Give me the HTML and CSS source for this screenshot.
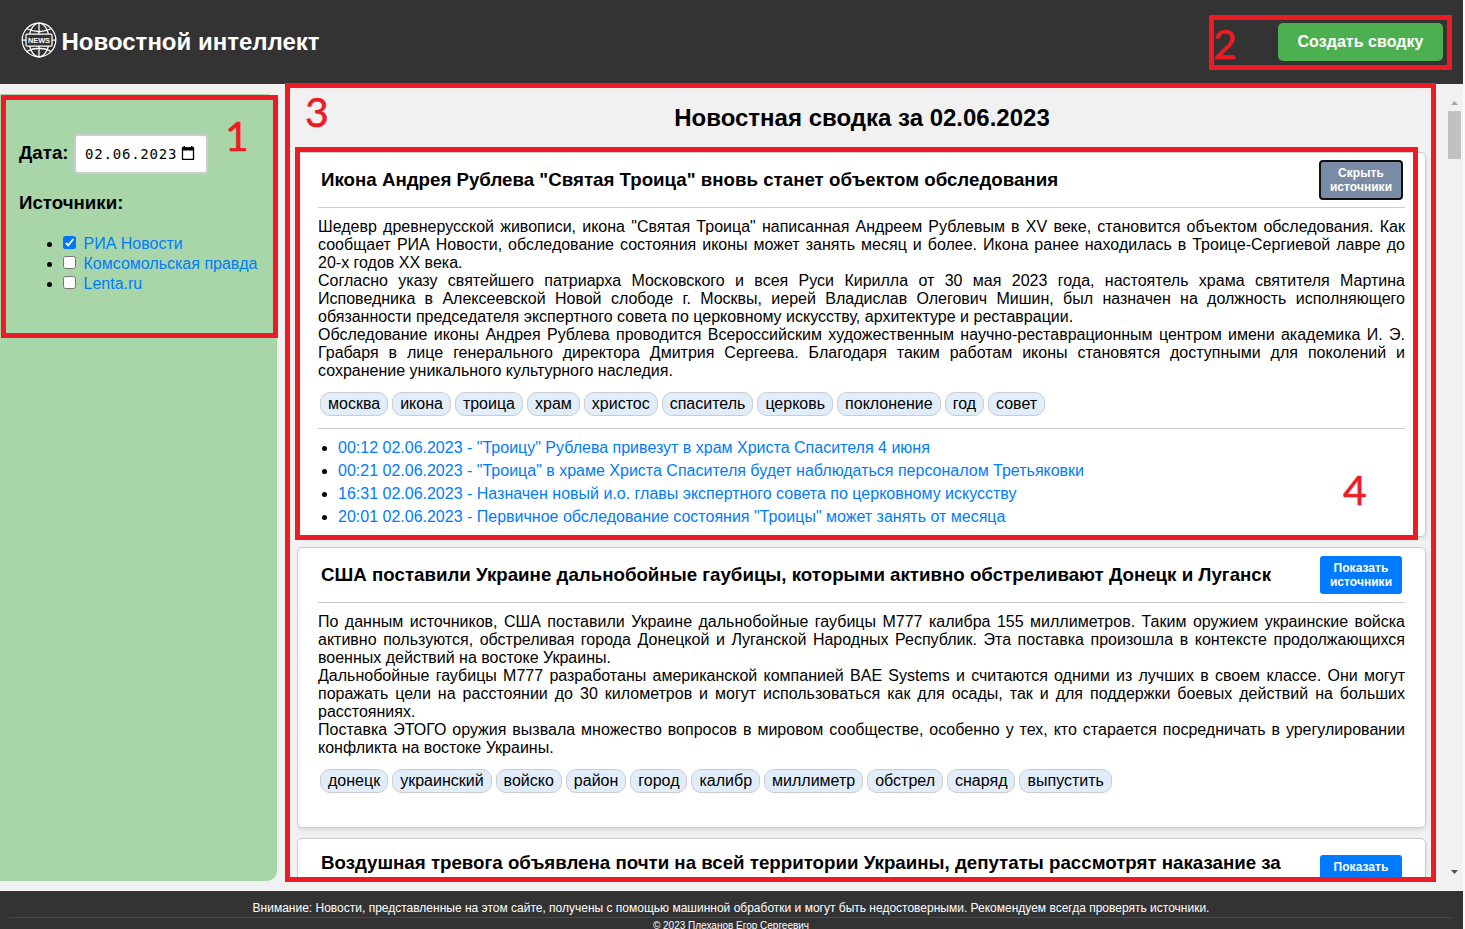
FILE: index.html
```html
<!DOCTYPE html>
<html lang="ru">
<head>
<meta charset="utf-8">
<title>Новостной интеллект</title>
<link rel="stylesheet" href="styles.css">
</head>
<body>
<div class="page">
  <header class="header">
    <div class="brand">
      <svg class="logo" viewBox="0 0 36 36" fill="none" stroke="#fff" stroke-width="1.25">
        <circle cx="18" cy="18" r="16.8"/>
        <ellipse cx="18" cy="18" rx="10" ry="16.8"/>
        <path d="M18 1v34M5.500 6.500Q18 13 30.500 6.500M5.500 29.500Q18 23 30.500 29.500M1 18h34"/>
        <rect x="5" y="12" width="26" height="12" rx="1" fill="#333"/>
        <text class="logo-text" x="18" y="21" text-anchor="middle" textLength="22" lengthAdjust="spacingAndGlyphs">NEWS</text>
      </svg>
      <h1>Новостной интеллект</h1>
    </div>
    <button class="create">Создать сводку</button>
  </header>

  <div class="main">
    <aside class="sidebar">
      <div class="date-row">
        <h3>Дата:</h3>
        <div class="date-input"><span>02.06.2023</span>
          <svg width="14" height="15" viewBox="0 0 14 15"><path d="M1.500 2h11v11.300h-11z" fill="none" stroke="#000" stroke-width="1.300"/><path d="M1 1.500h12V4.500H1zM2.500 0h1.500v2h-1.500zM10 0h1.500v2H10z"/></svg>
        </div>
      </div>
      <h3>Источники:</h3>
      <ul class="sources">
        <li><span class="check on"><svg viewBox="0 0 13 13"><path d="M2.800 6.800l2.500 2.500 5-6.300" fill="none" stroke="#fff" stroke-width="1.900"/></svg></span><a>РИА Новости</a></li>
        <li><span class="check"></span><a>Комсомольская правда</a></li>
        <li><span class="check"></span><a>Lenta.ru</a></li>
      </ul>
    </aside>

    <main class="feed">
      <h2>Новостная сводка за 02.06.2023</h2>
      <article class="card">
        <div class="card-head"><h3>Икона Андрея Рублева "Святая Троица" вновь станет объектом обследования</h3><button class="toggle active">Скрыть<br>источники</button></div>
        <div class="text">
          <p>Шедевр древнерусской живописи, икона "Святая Троица" написанная Андреем Рублевым в XV веке, становится объектом обследования. Как сообщает РИА Новости, обследование состояния иконы может занять месяц и более. Икона ранее находилась в Троице-Сергиевой лавре до 20-х годов XX века.</p>
          <p>Согласно указу святейшего патриарха Московского и всея Руси Кирилла от 30 мая 2023 года, настоятель храма святителя Мартина Исповедника в Алексеевской Новой слободе г. Москвы, иерей Владислав Олегович Мишин, был назначен на должность исполняющего обязанности председателя экспертного совета по церковному искусству, архитектуре и реставрации.</p>
          <p>Обследование иконы Андрея Рублева проводится Всероссийским художественным научно-реставрационным центром имени академика И. Э. Грабаря в лице генерального директора Дмитрия Сергеева. Благодаря таким работам иконы становятся доступными для поколений и сохранение уникального культурного наследия.</p>
        </div>
        <div class="tags"><span>москва</span><span>икона</span><span>троица</span><span>храм</span><span>христос</span><span>спаситель</span><span>церковь</span><span>поклонение</span><span>год</span><span>совет</span></div>
        <ul class="links">
          <li><a>00:12 02.06.2023 - "Троицу" Рублева привезут в храм Христа Спасителя 4 июня</a></li>
          <li><a>00:21 02.06.2023 - "Троица" в храме Христа Спасителя будет наблюдаться персоналом Третьяковки</a></li>
          <li><a>16:31 02.06.2023 - Назначен новый и.о. главы экспертного совета по церковному искусству</a></li>
          <li><a>20:01 02.06.2023 - Первичное обследование состояния "Троицы" может занять от месяца</a></li>
        </ul>
      </article>
      <article class="card collapsed">
        <div class="card-head"><h3>США поставили Украине дальнобойные гаубицы, которыми активно обстреливают Донецк и Луганск</h3><button class="toggle">Показать<br>источники</button></div>
        <div class="text">
          <p>По данным источников, США поставили Украине дальнобойные гаубицы М777 калибра 155 миллиметров. Таким оружием украинские войска активно пользуются, обстреливая города Донецкой и Луганской Народных Республик. Эта поставка произошла в контексте продолжающихся военных действий на востоке Украины.</p>
          <p>Дальнобойные гаубицы М777 разработаны американской компанией BAE Systems и считаются одними из лучших в своем классе. Они могут поражать цели на расстоянии до 30 километров и могут использоваться как для осады, так и для поддержки боевых действий на больших расстояниях.</p>
          <p>Поставка ЭТОГО оружия вызвала множество вопросов в мировом сообществе, особенно у тех, кто старается посредничать в урегулировании конфликта на востоке Украины.</p>
        </div>
        <div class="tags"><span>донецк</span><span>украинский</span><span>войско</span><span>район</span><span>город</span><span>калибр</span><span>миллиметр</span><span>обстрел</span><span>снаряд</span><span>выпустить</span></div>
      </article>
      <article class="card cut">
        <div class="card-head"><h3>Воздушная тревога объявлена почти на всей территории Украины, депутаты рассмотрят наказание за</h3><button class="toggle">Показать<br>источники</button></div>
      </article>
    </main>

    <div class="scrollbar">
      <svg class="arrow" width="7" height="4"><path d="M0 4L3.500 0L7 4z" fill="#a3a3a3"/></svg>
      <div class="thumb"></div>
      <svg class="arrow" width="7" height="4"><path d="M0 0H7L3.500 4z" fill="#505050"/></svg>
    </div>
  </div>

  <footer class="footer">
    <p class="notice">Внимание: Новости, представленные на этом сайте, получены с помощью машинной обработки и могут быть недостоверными. Рекомендуем всегда проверять источники.</p>
    <p class="copy">© 2023 Плеханов Егор Сергеевич</p>
  </footer>
</div>

<div class="mark mark-1"><span>1</span></div>
<div class="mark mark-2"><span>2</span></div>
<div class="mark mark-3"><span>3</span></div>
<div class="mark mark-4"><span>4</span></div>
</body>
</html>
```
FILE: styles.css
```css
* { box-sizing: border-box; }
body {
  margin: 0;
  height: 929px;
  overflow: hidden;
  position: relative;
  background: #fafafa;
  font: 16px/18px "Liberation Sans", Arial, sans-serif;
  color: #000;
}
h1, h2, h3, p, ul { margin: 0; padding: 0; }
button { font-family: inherit; border: 0; color: #fff; font-weight: bold; padding: 0; }
.page { width: 1463px; height: 929px; display: flex; flex-direction: column; background: #f1f1f1; overflow: hidden; }

.header { height: 84px; flex: none; background: #333; color: #fff; display: flex; justify-content: space-between; align-items: flex-start; padding: 22px 20px 0 21px; }
.brand { display: flex; gap: 4.500px; }
.logo { width: 36px; height: 36px; }
.logo-text { font: bold 8px "Liberation Sans", Arial, sans-serif; fill: #fff; stroke: none; }
.brand h1 { font-size: 24px; line-height: 28px; padding-top: 6px; white-space: nowrap; }
.create { width: 165px; height: 38px; margin-top: 1px; border-radius: 5px; background: #4caf50; font-size: 16px; letter-spacing: .05px; }

.main { height: 807px; flex: none; display: flex; }
.sidebar { width: 277px; height: 787px; margin-top: 10px; background: #a8d6a8; border-radius: 0 10px 10px 0; padding: 40px 0 0 19px; }
.sidebar h3 { font-size: 18.72px; line-height: 22px; }
.date-row { display: flex; align-items: center; gap: 5px; margin-bottom: 18px; }
.date-row h3 { padding-bottom: 3px; width: 50px; white-space: nowrap; }
.date-input { width: 134px; height: 40px; border: 2px solid #ccc; border-radius: 4px; background: #fff; display: flex; align-items: center; padding-left: 9px; gap: 4px; font: 14px/18px "DejaVu Sans Mono", monospace; letter-spacing: .8px; }
.date-input span { width: 92px; }
.date-input svg { margin-bottom: 2px; }
.sources { margin-top: 20px; padding-left: 44px; }
.sources li { height: 20px; line-height: 20px; white-space: nowrap; }
.sources a { margin-left: 7.500px; }
a { color: #007bff; }
.check { display: inline-block; width: 13px; height: 13px; background: #fff; border: 1px solid #767676; border-radius: 2.5px; vertical-align: 0; }
.check.on { background: #0075ff; border: 0; }
.check svg { display: block; }

.feed { width: 1149px; height: 797px; margin-left: 20px; overflow: hidden; padding-top: 20px; }
.feed h2 { font-size: 24px; line-height: 28px; width: 1130px; text-align: center; margin-bottom: 20px; }
.card { width: 1129px; height: 385px; background: #fff; border: 1px solid #ccc; border-radius: 5px; box-shadow: 0 2px 4px rgba(0,0,0,.1); padding: 0 20px; margin-bottom: 10px; }
.card.collapsed { height: 281px; }
.card-head { height: 55px; border-bottom: 1px solid #ccc; display: flex; justify-content: space-between; padding: 8px 3px 0; }
.card-head h3 { font-size: 18.72px; line-height: 22px; padding-top: 8px; white-space: nowrap; }
.toggle { width: 82px; height: 38px; background: #007bff; border-radius: 3px; font-size: 12px; line-height: 14px; letter-spacing: .05px; flex: none; }
.toggle.active { background: #7a8ba6; outline: 2px solid #101010; outline-offset: -1px; }
.cut .card-head { padding-top: 16px; }
.cut .card-head h3 { padding-top: 0; margin-top: -3px; }
.text { padding-top: 10px; text-align: justify; }
.tags { display: flex; gap: 4px; padding: 12px 0 12px 2px; }
.tags span { height: 24px; line-height: 18px; padding: 2px 7px; border: 1px solid #ccc; border-radius: 10px; background: #e1edfa; }
.links { border-top: 1px solid #ccc; padding: 7px 0 0 20px; }
.links li { height: 23px; line-height: 23px; }

.scrollbar { width: 17px; height: 787px; margin-top: 10px; padding: 7px 0; display: flex; flex-direction: column; align-items: center; }
.thumb { width: 13px; height: 48px; margin-top: 6px; background: #c1c1c1; }
.arrow { flex: none; }
.arrow:last-child { margin-top: auto; }

.footer { height: 38px; flex: none; background: #333; color: #fff; text-align: center; padding: 8px 10px 0 9px; overflow: hidden; }
.notice { font-size: 12px; line-height: 18px; border-bottom: 1px solid #474747; }
.copy { font-size: 10px; line-height: 16px; }

/* Numbered callouts lying over the page */
.mark { position: absolute; border: 5px solid #ed1c24; color: #ed1c24; font: 41px/42px Lato, sans-serif; -webkit-text-stroke: .6px #ed1c24; }
.mark span { position: absolute; }
.mark-1 { left: 1px; top: 95px; width: 277px; height: 243px; }
.mark-1 span { left: 219px; top: 15px; }
.mark-2 { left: 1209px; top: 15px; width: 243px; height: 55px; }
.mark-2 span { left: -1px; top: 3px; }
.mark-3 { left: 285px; top: 83px; width: 1151px; height: 799px; }
.mark-3 span { left: 15px; top: 3px; }
.mark-4 { left: 295px; top: 147px; width: 1123px; height: 393px; }
.mark-4 span { left: 1043px; top: 317px; }
```
